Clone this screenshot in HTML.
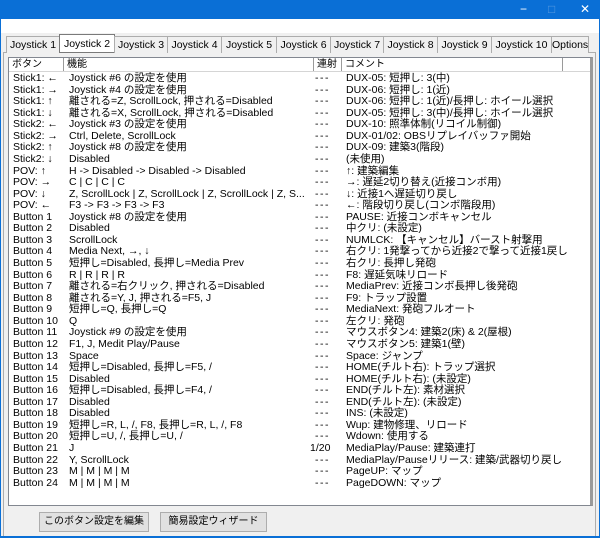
<!DOCTYPE html>
<html><head><meta charset="utf-8"><style>
*{margin:0;padding:0;box-sizing:border-box}
body{width:600px;height:538px;background:#f0f0f0;font-family:"Liberation Sans","Noto Sans CJK JP",sans-serif;font-size:10.5px;color:#000;position:relative;overflow:hidden}
.title{position:absolute;left:0;top:0;width:600px;height:19px;background:#0a6fd6}
.title span{position:absolute;color:#fff;font-size:12px;top:2px}
.client{position:absolute;left:0;top:19px;width:600px;height:517px;background:#f0f0f0;border-left:1px solid #0a6fd6;border-right:1px solid #0a6fd6}
.white{position:absolute;left:1px;top:19px;width:598px;height:14px;background:#fff}
.bottom{position:absolute;left:0;top:536px;width:600px;height:2px;background:#0a6fd6}
.tab{position:absolute;top:36px;height:17px;border:1px solid #adadad;border-bottom:none;background:#f0f0f0;font-size:10.5px;line-height:16px;white-space:nowrap;text-align:center;overflow:hidden}
.tab.sel{border:1px solid #7a7a7a;background:#fff;height:19px;top:34px;line-height:18px}
.panel{position:absolute;left:3px;top:52px;width:593px;height:484px;border:1px solid #adadad;border-bottom:none;background:#f0f0f0}
.list{position:absolute;left:8px;top:57px;width:585px;height:449px;background:#fff;border:1px solid #828790;border-right:3px solid #9a9a9a}
.hdr{position:absolute;left:0;top:0;width:100%;height:14px;background:#fff;border-bottom:1px solid #d5d5d5}
.hdr div{position:absolute;top:0;height:13px;line-height:13px;padding-left:3px;border-right:1px solid #9a9a9a;font-size:10px}
.rows{position:absolute;left:0;top:15px;width:100%}
.r{position:relative;height:11.57px;line-height:11.57px;white-space:nowrap}
.r span{position:absolute;top:0}
.a{left:4px}.b{left:60px}.c{left:306px;letter-spacing:1.5px}.d{left:337px}
.btn{position:absolute;top:512px;height:20px;border:1px solid #adadad;background:#e1e1e1;font-size:10px;line-height:18px;text-align:center;white-space:nowrap}
</style></head><body>
<div class="title"><span style="left:520px">−</span><span style="left:548px;color:#5a9be0">□</span><span style="left:580px">✕</span></div>
<div class="client"></div>
<div class="white"></div>
<div class="panel"></div>
<div class="tab" style="left:6px;width:54px">Joystick 1</div>
<div class="tab sel" style="left:59px;width:56px">Joystick 2</div>
<div class="tab" style="left:114px;width:54px">Joystick 3</div>
<div class="tab" style="left:167px;width:55px">Joystick 4</div>
<div class="tab" style="left:221px;width:56px">Joystick 5</div>
<div class="tab" style="left:276px;width:55px">Joystick 6</div>
<div class="tab" style="left:330px;width:54px">Joystick 7</div>
<div class="tab" style="left:383px;width:55px">Joystick 8</div>
<div class="tab" style="left:437px;width:55px">Joystick 9</div>
<div class="tab" style="left:491px;width:61px">Joystick 10</div>
<div class="tab" style="left:551px;width:38px">Options</div>
<div class="list">
<div class="hdr"><div style="left:0;width:55px">ボタン</div><div style="left:55px;width:250px">機能</div><div style="left:305px;width:28px">連射</div><div style="left:333px;width:221px">コメント</div></div>
<div class="rows">
<div class="r"><span class="a">Stick1: ←</span><span class="b">Joystick #6 の設定を使用</span><span class="c">---</span><span class="d">DUX-05: 短押し: 3(中)</span></div>
<div class="r"><span class="a">Stick1: →</span><span class="b">Joystick #4 の設定を使用</span><span class="c">---</span><span class="d">DUX-06: 短押し: 1(近)</span></div>
<div class="r"><span class="a">Stick1: ↑</span><span class="b">離される=Z, ScrollLock, 押される=Disabled</span><span class="c">---</span><span class="d">DUX-06: 短押し: 1(近)/長押し: ホイール選択</span></div>
<div class="r"><span class="a">Stick1: ↓</span><span class="b">離される=X, ScrollLock, 押される=Disabled</span><span class="c">---</span><span class="d">DUX-05: 短押し: 3(中)/長押し: ホイール選択</span></div>
<div class="r"><span class="a">Stick2: ←</span><span class="b">Joystick #3 の設定を使用</span><span class="c">---</span><span class="d">DUX-10: 照準体制(リコイル制御)</span></div>
<div class="r"><span class="a">Stick2: →</span><span class="b">Ctrl, Delete, ScrollLock</span><span class="c">---</span><span class="d">DUX-01/02: OBSリプレイバッファ開始</span></div>
<div class="r"><span class="a">Stick2: ↑</span><span class="b">Joystick #8 の設定を使用</span><span class="c">---</span><span class="d">DUX-09: 建築3(階段)</span></div>
<div class="r"><span class="a">Stick2: ↓</span><span class="b">Disabled</span><span class="c">---</span><span class="d">(未使用)</span></div>
<div class="r"><span class="a">POV: ↑</span><span class="b">H -&gt; Disabled -&gt; Disabled -&gt; Disabled</span><span class="c">---</span><span class="d">↑: 建築編集</span></div>
<div class="r"><span class="a">POV: →</span><span class="b">C | C | C | C</span><span class="c">---</span><span class="d">→: 遅延2切り替え(近接コンボ用)</span></div>
<div class="r"><span class="a">POV: ↓</span><span class="b">Z, ScrollLock | Z, ScrollLock | Z, ScrollLock | Z, S...</span><span class="c">---</span><span class="d">↓: 近接1へ遅延切り戻し</span></div>
<div class="r"><span class="a">POV: ←</span><span class="b">F3 -&gt; F3 -&gt; F3 -&gt; F3</span><span class="c">---</span><span class="d">←: 階段切り戻し(コンボ階段用)</span></div>
<div class="r"><span class="a">Button 1</span><span class="b">Joystick #8 の設定を使用</span><span class="c">---</span><span class="d">PAUSE: 近接コンボキャンセル</span></div>
<div class="r"><span class="a">Button 2</span><span class="b">Disabled</span><span class="c">---</span><span class="d">中クリ: (未設定)</span></div>
<div class="r"><span class="a">Button 3</span><span class="b">ScrollLock</span><span class="c">---</span><span class="d">NUMLCK: 【キャンセル】バースト射撃用</span></div>
<div class="r"><span class="a">Button 4</span><span class="b">Media Next, →, ↓</span><span class="c">---</span><span class="d">右クリ: 1発撃ってから近接2で撃って近接1戻し</span></div>
<div class="r"><span class="a">Button 5</span><span class="b">短押し=Disabled, 長押し=Media Prev</span><span class="c">---</span><span class="d">右クリ: 長押し発砲</span></div>
<div class="r"><span class="a">Button 6</span><span class="b">R | R | R | R</span><span class="c">---</span><span class="d">F8: 遅延気味リロード</span></div>
<div class="r"><span class="a">Button 7</span><span class="b">離される=右クリック, 押される=Disabled</span><span class="c">---</span><span class="d">MediaPrev: 近接コンボ長押し後発砲</span></div>
<div class="r"><span class="a">Button 8</span><span class="b">離される=Y, J, 押される=F5, J</span><span class="c">---</span><span class="d">F9: トラップ設置</span></div>
<div class="r"><span class="a">Button 9</span><span class="b">短押し=Q, 長押し=Q</span><span class="c">---</span><span class="d">MediaNext: 発砲フルオート</span></div>
<div class="r"><span class="a">Button 10</span><span class="b">Q</span><span class="c">---</span><span class="d">左クリ: 発砲</span></div>
<div class="r"><span class="a">Button 11</span><span class="b">Joystick #9 の設定を使用</span><span class="c">---</span><span class="d">マウスボタン4: 建築2(床) &amp; 2(屋根)</span></div>
<div class="r"><span class="a">Button 12</span><span class="b">F1, J, Medit Play/Pause</span><span class="c">---</span><span class="d">マウスボタン5: 建築1(壁)</span></div>
<div class="r"><span class="a">Button 13</span><span class="b">Space</span><span class="c">---</span><span class="d">Space: ジャンプ</span></div>
<div class="r"><span class="a">Button 14</span><span class="b">短押し=Disabled, 長押し=F5, /</span><span class="c">---</span><span class="d">HOME(チルト右): トラップ選択</span></div>
<div class="r"><span class="a">Button 15</span><span class="b">Disabled</span><span class="c">---</span><span class="d">HOME(チルト右): (未設定)</span></div>
<div class="r"><span class="a">Button 16</span><span class="b">短押し=Disabled, 長押し=F4, /</span><span class="c">---</span><span class="d">END(チルト左): 素材選択</span></div>
<div class="r"><span class="a">Button 17</span><span class="b">Disabled</span><span class="c">---</span><span class="d">END(チルト左): (未設定)</span></div>
<div class="r"><span class="a">Button 18</span><span class="b">Disabled</span><span class="c">---</span><span class="d">INS: (未設定)</span></div>
<div class="r"><span class="a">Button 19</span><span class="b">短押し=R, L, /, F8, 長押し=R, L, /, F8</span><span class="c">---</span><span class="d">Wup: 建物修理、リロード</span></div>
<div class="r"><span class="a">Button 20</span><span class="b">短押し=U, /, 長押し=U, /</span><span class="c">---</span><span class="d">Wdown: 使用する</span></div>
<div class="r"><span class="a">Button 21</span><span class="b">J</span><span class="c" style="left:301px;letter-spacing:0">1/20</span><span class="d">MediaPlay/Pause: 建築連打</span></div>
<div class="r"><span class="a">Button 22</span><span class="b">Y, ScrollLock</span><span class="c">---</span><span class="d">MediaPlay/Pauseリリース: 建築/武器切り戻し</span></div>
<div class="r"><span class="a">Button 23</span><span class="b">M | M | M | M</span><span class="c">---</span><span class="d">PageUP: マップ</span></div>
<div class="r"><span class="a">Button 24</span><span class="b">M | M | M | M</span><span class="c">---</span><span class="d">PageDOWN: マップ</span></div>
</div>
</div>
<div class="btn" style="left:39px;width:110px">このボタン設定を編集</div>
<div class="btn" style="left:160px;width:107px">簡易設定ウィザード</div>
<div class="bottom"></div>
</body></html>
